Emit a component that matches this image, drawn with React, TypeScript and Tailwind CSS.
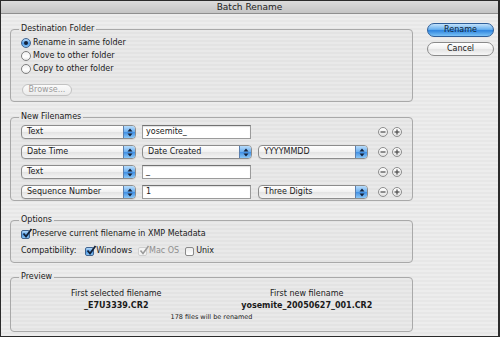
import React from 'react'

const font = "font-['DejaVu_Sans','Liberation_Sans',sans-serif]"

const Arrows = () => (
  <svg width="6" height="9" viewBox="0 0 6 9">
    <path d="M3 0.5 L5.5 3.5 H0.5 Z" fill="#15223a" />
    <path d="M3 8.5 L5.5 5.5 H0.5 Z" fill="#15223a" />
  </svg>
)

const Popup = ({ label, className = '' }: { label: string; className?: string }) => (
  <div
    className={`flex h-[14px] items-stretch overflow-hidden rounded-[4px] border border-[#8c8c8c] bg-[linear-gradient(#ffffff,#f1f1f1_50%,#e3e3e3_51%,#f4f4f4)] shadow-[0_1px_0_rgba(0,0,0,0.08)] ${className}`}
  >
    <span className="flex-1 pl-[5px] text-[8px] leading-[12px] text-[#1a1a1a]">{label}</span>
    <span className="flex w-[12px] items-center justify-center border-l border-[#5a7fae] bg-[linear-gradient(#b8dcfb,#6aaeef_50%,#3f8ee3_51%,#8cc8f7)]">
      <Arrows />
    </span>
  </div>
)

const Field = ({ value, className = '' }: { value: string; className?: string }) => (
  <div
    className={`h-[14px] border border-[#9b9b9b] border-t-[#727272] bg-white pl-[3px] text-[8px] leading-[12px] text-[#1a1a1a] shadow-[inset_0_1px_1px_rgba(0,0,0,0.12)] ${className}`}
  >
    {value}
  </div>
)

const Radio = ({ checked }: { checked?: boolean }) =>
  checked ? (
    <span className="flex h-[10px] w-[10px] items-center justify-center rounded-full border border-[#41648f] bg-[linear-gradient(#b6dafa,#4f9be6_55%,#8cc6f5)]">
      <span className="h-[4px] w-[4px] rounded-full bg-[#13223a]" />
    </span>
  ) : (
    <span className="h-[10px] w-[10px] rounded-full border border-[#7f7f7f] bg-[linear-gradient(#f0f0f0,#ffffff_60%,#e6e6e6)]" />
  )

const Check = ({ state }: { state: 'on' | 'off' | 'dim' }) => {
  if (state === 'on')
    return (
      <span className="relative h-[9px] w-[9px] rounded-[2px] border border-[#41648f] bg-[linear-gradient(#b6dafa,#4f9be6_55%,#8cc6f5)]">
        <svg className="absolute -top-[3px] left-0" width="11" height="11" viewBox="0 0 11 11">
          <path d="M1.5 5.5 L4 8.5 L9.5 1" stroke="#13223a" strokeWidth="1.8" fill="none" />
        </svg>
      </span>
    )
  if (state === 'dim')
    return (
      <span className="relative h-[9px] w-[9px] rounded-[2px] border border-[#cfcfcf] bg-[#f3f3f3]">
        <svg className="absolute -top-[3px] left-0" width="11" height="11" viewBox="0 0 11 11">
          <path d="M1.5 5.5 L4 8.5 L9.5 1" stroke="#9a9a9a" strokeWidth="1.5" fill="none" />
        </svg>
      </span>
    )
  return <span className="h-[9px] w-[9px] rounded-[2px] border border-[#8a8a8a] bg-[linear-gradient(#ececec,#ffffff)]" />
}

const RoundBtn = ({ sign }: { sign: '-' | '+' }) => (
  <span className="flex h-[10px] w-[10px] items-center justify-center rounded-full border border-[#8d8d8d] bg-[linear-gradient(#ffffff,#e2e2e2)]">
    <svg width="6" height="6" viewBox="0 0 6 6">
      <path d="M0.5 3 H5.5" stroke="#4a4a4a" strokeWidth="1.2" />
      {sign === '+' && <path d="M3 0.5 V5.5" stroke="#4a4a4a" strokeWidth="1.2" />}
    </svg>
  </span>
)

const Group = ({ title, className = '', children }: { title: string; className?: string; children: React.ReactNode }) => (
  <fieldset className={`rounded-[4px] border border-[#a9a9a9] bg-black/[0.015] px-[10px] ${className}`}>
    <legend className="-ml-[2px] px-[2px] text-[8px] leading-[10px] text-[#1a1a1a]">{title}</legend>
    {children}
  </fieldset>
)

const Row = ({ children, controls = true }: { children: React.ReactNode; controls?: boolean }) => (
  <div className="flex h-[14px] items-center">
    {children}
    {controls && (
      <div className="ml-auto flex gap-[4px]">
        <RoundBtn sign="-" />
        <RoundBtn sign="+" />
      </div>
    )}
  </div>
)

export default function App() {
  return (
    <div className={`${font} flex h-[337px] w-[500px] flex-col border border-r-2 border-[#2b2b2b] bg-[repeating-linear-gradient(0deg,#ededed_0px,#ededed_2px,#e7e7e7_2px,#e7e7e7_4px)] text-[#1a1a1a]`}>
      <div className="flex h-[13px] items-center justify-center border-b border-[#8f8f8f] bg-[linear-gradient(#dcdcdc,#c4c4c4)] text-[9px] leading-[12px] text-[#222]">
        Batch Rename
      </div>

      <div className="flex flex-1 pl-[9px]">
        <div className="flex w-[403px] flex-col">
          <Group title="Destination Folder" className="mt-[10px] pb-[2px]">
            <div className="mt-[2px] flex flex-col">
              <label className="flex h-[13px] items-center gap-[2px] text-[8px]">
                <Radio checked />
                <span>Rename in same folder</span>
              </label>
              <label className="flex h-[13px] items-center gap-[2px] text-[8px]">
                <Radio />
                <span>Move to other folder</span>
              </label>
              <label className="flex h-[13px] items-center gap-[2px] text-[8px]">
                <Radio />
                <span>Copy to other folder</span>
              </label>
            </div>
            <button className="ml-[1px] mt-[3px] h-[12px] w-[50px] rounded-[6px] border border-[#c2c2c2] bg-[linear-gradient(#fbfbfb,#ececec)] text-[8px] leading-[10px] text-[#9a9a9a]">
              Browse...
            </button>
          </Group>

          <Group title="New Filenames" className="mt-[10px] pb-[1px]">
            <div className="mt-[3px] flex flex-col gap-[6px]">
              <Row>
                <Popup label="Text" className="w-[115px]" />
                <Field value="yosemite_" className="ml-[6px] w-[109px]" />
              </Row>
              <Row>
                <Popup label="Date Time" className="w-[115px]" />
                <Popup label="Date Created" className="ml-[6px] w-[110px]" />
                <Popup label="YYYYMMDD" className="ml-[6px] w-[110px]" />
              </Row>
              <Row>
                <Popup label="Text" className="w-[115px]" />
                <Field value="_" className="ml-[6px] w-[109px]" />
              </Row>
              <Row>
                <Popup label="Sequence Number" className="w-[115px]" />
                <Field value="1" className="ml-[6px] w-[109px]" />
                <Popup label="Three Digits" className="ml-[7px] w-[110px]" />
              </Row>
            </div>
          </Group>

          <Group title="Options" className="mt-[14px] pb-[5px]">
            <div className="mt-[3px] flex h-[12px] items-center gap-[2px] text-[8px]">
              <Check state="on" />
              <span>Preserve current filename in XMP Metadata</span>
            </div>
            <div className="mt-[5px] flex h-[12px] items-center text-[8px]">
              <span className="mr-[9px]">Compatibility:</span>
              <Check state="on" />
              <span className="ml-[2px] mr-[6px]">Windows</span>
              <Check state="dim" />
              <span className="ml-[2px] mr-[6px] text-[#8f8f8f]">Mac OS</span>
              <Check state="off" />
              <span className="ml-[2px]">Unix</span>
            </div>
          </Group>

          <Group title="Preview" className="mt-[9px] pb-[9px]">
            <div className="mt-[6px] grid grid-cols-2 text-center text-[8px] leading-[12px]">
              <div className="flex flex-col">
                <span>First selected filename</span>
                <span className="font-bold">_E7U3339.CR2</span>
              </div>
              <div className="flex flex-col">
                <span>First new filename</span>
                <span className="font-bold">yosemite_20050627_001.CR2</span>
              </div>
            </div>
            <div className="mt-[1px] text-center text-[6.5px] leading-[9px]">178 files will be renamed</div>
          </Group>
        </div>

        <div className="ml-[14px] mt-[9px] flex w-[67px] flex-col gap-[5px]">
          <button className="h-[14px] rounded-full border border-[#2f5f9a] bg-[linear-gradient(#c3e2fb,#6ab1ef_45%,#2f86e0_55%,#7cc3f6)] text-[8px] leading-[12px] text-[#0f1f38]">
            Rename
          </button>
          <button className="h-[14px] rounded-full border border-[#8a8a8a] bg-[linear-gradient(#ffffff,#f2f2f2_45%,#e4e4e4_55%,#f7f7f7)] text-[8px] leading-[12px] text-[#1a1a1a]">
            Cancel
          </button>
        </div>
      </div>
    </div>
  )
}
